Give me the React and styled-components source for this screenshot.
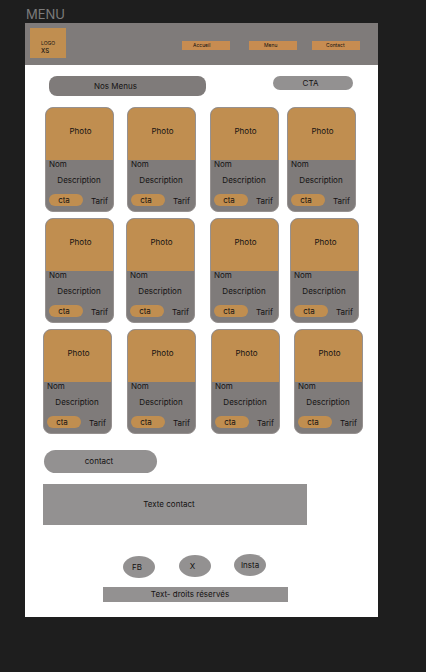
import React from "react";
import styled, { createGlobalStyle } from "styled-components";

const GlobalStyle = createGlobalStyle`
  *, *::before, *::after { box-sizing: border-box; }
  body {
    margin: 0;
    background: #1e1e1e;
    color: #141212;
    font-family: Inter, "Liberation Sans", sans-serif;
    font-size: 8px;
    line-height: 10px;
  }
  h1, h2, p { margin: 0; font-weight: 400; }
  button { border: 0; font: inherit; color: inherit; cursor: pointer; }
  a { color: inherit; text-decoration: none; }
`;

const colors = {
  ochre: "#c08e50",
  orange: "#c78c51",
  grey: "#7f7b7a",
  silver: "#939191",
};

const Canvas = styled.div`
  padding: 6px 48px 55px 25px;
`;

const FrameLabel = styled.h1`
  padding-left: 1px;
  height: 17px;
  color: #7c7c7c;
  font-size: 13px;
  line-height: 16px;
`;

const Frame = styled.div`
  background: #fff;
  padding-bottom: 15px;
`;

const Header = styled.header`
  display: flex;
  align-items: flex-start;
  justify-content: space-between;
  padding: 5px 18px 7px 5px;
  background: ${colors.grey};
`;

const Logo = styled.a`
  display: flex;
  flex-direction: column;
  width: 36px;
  height: 30px;
  padding: 11px 0 0 11px;
  background: ${colors.ochre};
  font-size: 5px;
  line-height: 8px;
`;

const LogoMark = styled.span`
  font-size: 6px;
  font-weight: 500;
`;

const Nav = styled.nav`
  display: grid;
  grid-template-columns: 48px 19px 48px 15px 48px;
  padding-top: 13px;
`;

const NavLink = styled.a`
  grid-column: ${(p) => p.$column};
  padding-left: ${(p) => p.$inset}px;
  background: ${colors.orange};
  font-size: 5px;
  line-height: 9px;
`;

const TitleRow = styled.div`
  display: flex;
  align-items: flex-start;
  justify-content: space-between;
  padding: 11px 25px 11px 24px;
`;

const Title = styled.h2`
  width: 157px;
  padding-left: 45px;
  border-radius: 8px;
  background: ${colors.grey};
  font-size: 8px;
  line-height: 20px;
`;

const TitleButton = styled.button`
  width: 80px;
  height: 14px;
  padding: 0 5px 0 0;
  border-radius: 7px;
  background: ${colors.silver};
`;

const Rows = styled.main`
  display: grid;
  gap: 6px;
`;

const CardRow = styled.section`
  display: grid;
  grid-template-columns: ${(p) => p.$gaps.map((g) => `${g}px`).join(" 1fr ")};
`;

const CardShell = styled.article`
  grid-column: ${(p) => p.$column};
  overflow: hidden;
  border: 1px solid #969190;
  border-radius: 8px;
  background: ${colors.grey};
`;

const Photo = styled.div`
  display: grid;
  place-items: center;
  height: 52px;
  padding: 0 0 6px 2px;
  background: ${colors.ochre};
`;

const CardBody = styled.div`
  height: 51px;
  padding-left: 3px;
  line-height: 8px;
`;

const Description = styled.p`
  padding: 8px 4px 10px 0;
  text-align: center;
`;

const CardFooter = styled.div`
  display: flex;
  justify-content: space-between;
  padding-right: 5px;
  line-height: 14px;
`;

const CardButton = styled.button`
  width: 34px;
  height: 12px;
  padding: 0 4px 0 0;
  border-radius: 6px;
  background: ${colors.ochre};
  line-height: 12px;
`;

const ContactTitle = styled.h2`
  width: 113px;
  margin: 16px 0 11px 19px;
  padding-right: 3px;
  border-radius: 12px;
  background: ${colors.silver};
  font-size: 8px;
  line-height: 23px;
  text-align: center;
`;

const ContactText = styled.p`
  margin: 0 71px 0 18px;
  padding-right: 12px;
  background: ${colors.silver};
  line-height: 41px;
  text-align: center;
`;

const Footer = styled.footer`
  padding: 29px 90px 0 78px;
`;

const Socials = styled.div`
  display: flex;
  justify-content: space-between;
  height: 24px;
  padding: 0 22px 0 20px;
`;

const Social = styled.a`
  align-self: ${(p) => p.$align};
  width: 32px;
  padding-right: ${(p) => p.$shift || 0}px;
  border-radius: 50%;
  background: ${colors.silver};
  line-height: 22px;
  text-align: center;
`;

const Rights = styled.p`
  margin-top: 9px;
  padding-right: 11px;
  background: ${colors.silver};
  line-height: 15px;
  text-align: center;
`;

const links = [
  { label: "Accueil", inset: 11 },
  { label: "Menu", inset: 15 },
  { label: "Contact", inset: 14 },
];

const rows = [
  [20, 13, 14, 8, 22],
  [20, 12, 15, 11, 19],
  [18, 15, 15, 14, 15],
];

function Card({ column }) {
  return (
    <CardShell $column={column}>
      <Photo>Photo</Photo>
      <CardBody>
        <p>Nom</p>
        <Description>Description</Description>
        <CardFooter>
          <CardButton type="button">cta</CardButton>
          <span>Tarif</span>
        </CardFooter>
      </CardBody>
    </CardShell>
  );
}

export default function App() {
  return (
    <Canvas>
      <GlobalStyle />
      <FrameLabel>MENU</FrameLabel>
      <Frame>
        <Header>
          <Logo href="#">
            <span>LOGO</span>
            <LogoMark>XS</LogoMark>
          </Logo>
          <Nav>
            {links.map((link, i) => (
              <NavLink key={link.label} href="#" $column={i * 2 + 1} $inset={link.inset}>
                {link.label}
              </NavLink>
            ))}
          </Nav>
        </Header>
        <TitleRow>
          <Title>Nos Menus</Title>
          <TitleButton type="button">CTA</TitleButton>
        </TitleRow>
        <Rows>
          {rows.map((gaps, r) => (
            <CardRow key={r} $gaps={gaps}>
              {[2, 4, 6, 8].map((column) => (
                <Card key={column} column={column} />
              ))}
            </CardRow>
          ))}
        </Rows>
        <ContactTitle>contact</ContactTitle>
        <ContactText>Texte contact</ContactText>
        <Footer>
          <Socials>
            <Social href="#" $align="end" $shift={4}>FB</Social>
            <Social href="#" $align="center" $shift={4}>X</Social>
            <Social href="#" $align="start">Insta</Social>
          </Socials>
          <Rights>Text- droits réservés</Rights>
        </Footer>
      </Frame>
    </Canvas>
  );
}
